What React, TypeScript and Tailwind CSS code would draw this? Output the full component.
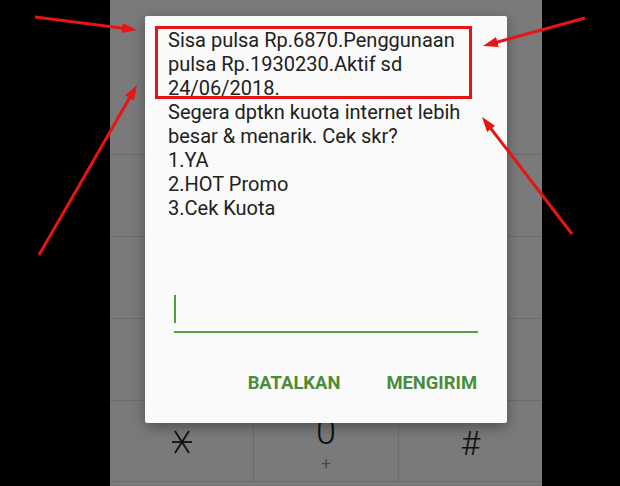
import React from "react";

const font = { fontFamily: "Roboto, 'Noto Sans', sans-serif" };

function Arrows() {
  return (
    <svg
      className="absolute left-0 top-0 pointer-events-none"
      width={620}
      height={486}
      viewBox="0 0 620 486"
    >
      <defs>
        <marker
          id="ah"
          markerWidth="5"
          markerHeight="3.4"
          refX="3"
          refY="1.7"
          orient="auto"
        >
          <path d="M0,0 L5,1.7 L0,3.4 z" fill="#e81313" />
        </marker>
      </defs>
      <g stroke="#e81313" strokeWidth="3" fill="none" markerEnd="url(#ah)">
        <line x1="35" y1="17" x2="131" y2="29.2" />
        <line x1="39" y1="255" x2="134" y2="90.2" />
        <line x1="585" y1="18" x2="488.8" y2="44.4" />
        <line x1="572" y1="234" x2="485.7" y2="121.8" />
      </g>
    </svg>
  );
}

function Key({ children }: { children?: React.ReactNode }) {
  return (
    <div className="flex-1 flex flex-col items-center justify-center border-l border-[#6c6c6c] first:border-l-0">
      {children}
    </div>
  );
}

export default function App() {
  const lines = [
    "Sisa pulsa Rp.6870.Penggunaan",
    "pulsa Rp.1930230.Aktif sd",
    "24/06/2018.",
    "Segera dptkn kuota internet lebih",
    "besar & menarik. Cek skr?",
    "1.YA",
    "2.HOT Promo",
    "3.Cek Kuota",
  ];
  return (
    <div className="relative w-[620px] h-[486px] bg-black flex overflow-hidden" style={font}>
      <div className="relative ml-[110px] w-[432px] h-[486px] bg-[#7a7a7a] flex flex-col">
        <div className="h-[155px] border-b border-[#6c6c6c]" />
        {[0, 1, 2].map((r) => (
          <div key={r} className="h-[82px] flex border-b border-[#6c6c6c]">
            <Key />
            <Key />
            <Key />
          </div>
        ))}
        <div className="h-[81px] flex border-b border-[#6c6c6c]">
          <Key>
            <svg width="20" height="24" viewBox="0 0 20 24" className="mt-[2px]">
              <g stroke="#111" strokeWidth="1.8" strokeLinecap="butt">
                <line x1="0" y1="12" x2="20" y2="12" />
                <line x1="3" y1="1" x2="17" y2="23" />
                <line x1="17" y1="1" x2="3" y2="23" />
              </g>
            </svg>
          </Key>
          <Key>
            <div className="flex flex-col items-center mt-[3px]">
              <span className="text-[36px] leading-[36px] text-[#111] font-light">0</span>
              <span className="text-[17px] leading-[16px] mt-[5px] text-[#4a4a4a]">+</span>
            </div>
          </Key>
          <Key>
            <span className="text-[34px] leading-[34px] text-[#111] font-light mt-[4px]">#</span>
          </Key>
        </div>

        {/* dialog */}
        <div className="absolute left-[35px] top-[16px] w-[362px] h-[407px] bg-[#fafafa] rounded-[2px] shadow-[0_4px_14px_rgba(0,0,0,0.35)] flex flex-col">
          <div className="pl-[23px] pt-[11.5px] text-[20px] leading-[24px] text-[#212121] whitespace-nowrap">
            {lines.map((l) => (
              <div key={l}>{l}</div>
            ))}
          </div>
          <div className="mx-[29px] mt-[75.5px] flex flex-col">
            <div className="w-[2px] h-[28px] bg-[#4f9e3a]" />
            <div className="mt-[8px] h-[1.5px] bg-[#55a33c]" />
          </div>
          <div className="mt-[40px] flex justify-end gap-[46px] pr-[30px] text-[18.4px] leading-[20px] font-bold text-[#4a8c3a]">
            <span>BATALKAN</span>
            <span>MENGIRIM</span>
          </div>
        </div>

        {/* annotation box */}
        <div className="absolute left-[45px] top-[26px] w-[317px] h-[73px] border-[3px] border-[#e81313]" />
      </div>
      <Arrows />
    </div>
  );
}
